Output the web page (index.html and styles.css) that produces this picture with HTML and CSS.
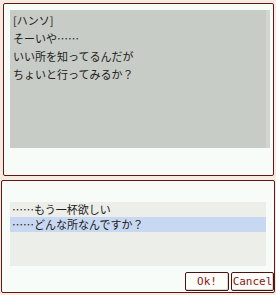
FILE: index.html
```html
<!DOCTYPE html>
<html lang="ja">
<head>
    <meta charset="UTF-8">
    <title>会話</title>
    <link rel="stylesheet" href="styles.css">
</head>
<body>
    <div class="talk">
        <div class="talk-text">
            <p>[ハンソ]</p>
            <p>そーいや……</p>
            <p>いい所を知ってるんだが</p>
            <p>ちょいと行ってみるか？</p>
        </div>
    </div>

    <div class="choice">
        <ul class="choice-list">
            <li>……もう一杯欲しい</li>
            <li class="selected">……どんな所なんですか？</li>
        </ul>
        <div class="buttons">
            <button class="btn btn-ok">Ok!</button>
            <button class="btn btn-cancel">Cancel</button>
        </div>
    </div>
</body>
</html>
```

FILE: styles.css
```css
body {
    margin: 0;
    width: 276px;
    height: 295px;
    background-color: #f6ebe0;
    font-family: "Noto Sans CJK JP", "DejaVu Sans", sans-serif;
    font-size: 11px;
    color: #202020;
}
.talk {
    margin: 3px 2px 0 3px;
    height: 173px;
    padding: 6px 0 0 6px;
    box-sizing: border-box;
    border: 1px solid #681414;
    border-radius: 2px;
    background-color: #f8fcf8;
}
.talk-text {
    width: 260px;
    height: 138px;
    padding: 1px 0 0 3px;
    box-sizing: border-box;
    background-color: #c8ccc6;
    border-right: 4px solid #d2d6d0;
}
.talk-text p {
    margin: 0;
    line-height: 18px;
}
.choice {
    margin: 4px 1px 0 1px;
    height: 113px;
    box-sizing: border-box;
    padding: 21px 0 0 8px;
    border: 1px solid #681414;
    border-radius: 2px;
    background-color: #f8fcf8;
}
.choice-list {
    list-style: none;
    margin: 0;
    padding: 0;
    width: 256px;
    height: 64px;
    background-color: #eceee9;
}
.choice-list li {
    height: 15px;
    line-height: 15px;
    padding-left: 2px;
}
.choice-list .selected {
    background-color: #c8d8f2;
}
.buttons {
    display: flex;
    justify-content: flex-end;
    gap: 2px;
    margin-top: 6px;
}
.btn {
    height: 19px;
    padding: 0;
    border: 1px solid #501010;
    border-radius: 2px;
    background-color: #fcfcf8;
    box-shadow: inset -1px -1px 0 #d8d8d0;
    font-family: "DejaVu Sans Mono", monospace;
    font-size: 11px;
    color: #8a1818;
}
.btn-ok {
    width: 44px;
}
.btn-cancel {
    width: 43px;
}
```
